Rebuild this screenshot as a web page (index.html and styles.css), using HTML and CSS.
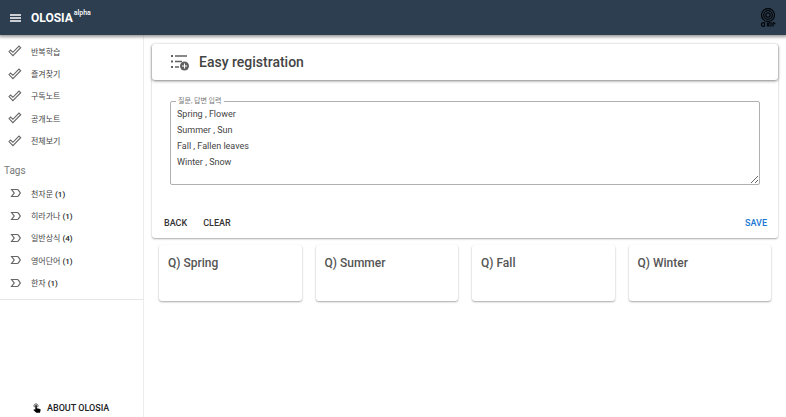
FILE: index.html
```html
<!DOCTYPE html>
<html lang="ko">
<head>
<meta charset="utf-8">
<meta name="viewport" content="width=device-width, initial-scale=1">
<title>OLOSIA</title>
<link rel="stylesheet" href="styles.css">
</head>
<body>
<svg class="defs" aria-hidden="true">
  <symbol id="check" viewBox="0 0 14 12"><path d="M1 6.600 2.600 5l2.300 2.300L11 1.100l1.700 1.600-7.800 7.900z"/></symbol>
  <symbol id="tag" viewBox="0 0 12 10"><path d="M1.600 1.500h5.600q.7 0 1.200.6L10.300 5 8.400 7.900q-.5.6-1.200.6H1.600L4.200 5z"/></symbol>
</svg>
<header class="topbar">
  <button class="menu" type="button" aria-label="Menu"><svg viewBox="0 0 12 8"><path d="M0 1h11M0 4h11M0 7h11"/></svg></button>
  <a class="brand" href="#">OLOSIA <sup>alpha</sup></a>
  <svg class="emblem" viewBox="0 0 16 20" aria-hidden="true">
    <circle cx="8" cy="7" r="6.500"/><circle cx="8" cy="7" r="4.300"/><circle cx="8" cy="7" r="2.200"/>
    <path d="M4.500 14.700c-4-1-4 4.500 0 3.500M4.500 14v4.500M7.500 14.500v4M10 14.700c-2 0-2 3.500 0 3.500M11 14v4.500M13 14.700c2 0 2 1 1.500 1.500M13 14.500v4"/>
  </svg>
</header>
<div class="shell">
  <aside class="sidebar">
    <nav>
      <ul class="list">
        <li><a href="#"><svg class="check"><use href="#check"/></svg>반복학습</a></li>
        <li><a href="#"><svg class="check"><use href="#check"/></svg>즐겨찾기</a></li>
        <li><a href="#"><svg class="check"><use href="#check"/></svg>구독노트</a></li>
        <li><a href="#"><svg class="check"><use href="#check"/></svg>공개노트</a></li>
        <li><a href="#"><svg class="check"><use href="#check"/></svg>전체보기</a></li>
      </ul>
      <h2 class="tags-title">Tags</h2>
      <ul class="list">
        <li><a href="#"><svg class="tag"><use href="#tag"/></svg><span>천자문 <b>(1)</b></span></a></li>
        <li><a href="#"><svg class="tag"><use href="#tag"/></svg><span>히라가나 <b>(1)</b></span></a></li>
        <li><a href="#"><svg class="tag"><use href="#tag"/></svg><span>일반상식 <b>(4)</b></span></a></li>
        <li><a href="#"><svg class="tag"><use href="#tag"/></svg><span>영어단어 <b>(1)</b></span></a></li>
        <li><a href="#"><svg class="tag"><use href="#tag"/></svg><span>한자 <b>(1)</b></span></a></li>
      </ul>
    </nav>
    <a class="about" href="#"><svg viewBox="0 0 8 10" aria-hidden="true"><path class="ring" d="M1.500 4.200a2 2 0 1 1 3 0"/><path d="M2.300 2.300q.8-.8 1.500 0v3l3.300.8q.7.300.5 1L7 9.700H3.300L.4 6.900l.7-.6 1.200.5z"/></svg>ABOUT OLOSIA</a>
  </aside>
  <main class="content">
    <form class="panel">
      <header class="panel-head">
        <svg viewBox="0 0 18 17" aria-hidden="true"><path class="line" d="M4 2h12M4 7.500h7M4 13h4"/><path d="M0 1h2v2H0zM0 6.500h2v2H0zM0 12h2v2H0z"/><circle cx="13.500" cy="12" r="4.500"/><path class="plus" d="M13.500 9.500v5M11 12h5"/></svg>
        <h1>Easy registration</h1>
      </header>
      <div class="field">
        <label for="entries">질문, 답변 입력</label>
        <textarea id="entries" spellcheck="false">Spring , Flower
Summer , Sun
Fall , Fallen leaves
Winter , Snow</textarea>
      </div>
      <div class="actions">
        <button type="button">BACK</button>
        <button type="button">CLEAR</button>
        <button class="save" type="button">SAVE</button>
      </div>
    </form>
    <section class="cards">
      <article>Q) Spring</article>
      <article>Q) Summer</article>
      <article>Q) Fall</article>
      <article>Q) Winter</article>
    </section>
  </main>
</div>
</body>
</html>
```
FILE: styles.css
```css
* { box-sizing: border-box; }
body {
  margin: 0;
  min-height: 100vh;
  display: flex;
  flex-direction: column;
  background: #fff;
  color: #444;
  font-family: Roboto, "Noto Sans CJK KR", sans-serif;
  font-size: 9px;
}
a { color: inherit; text-decoration: none; }
button { border: 0; padding: 0; background: none; font: inherit; color: inherit; }
svg { display: block; flex: none; }
.defs { position: absolute; width: 0; height: 0; }

.topbar {
  position: relative;
  display: flex;
  align-items: center;
  height: 35px;
  padding: 0 10px;
  background: #2c3e50;
  color: #fff;
  box-shadow: 0 1px 3px 1px rgba(0, 0, 0, .4);
}
.menu svg { width: 12px; height: 8px; stroke: #fff; stroke-width: 1.3; }
.brand { display: flex; gap: 1px; margin-left: 9px; font-size: 12px; font-weight: 700; line-height: 16px; }
.brand sup { font-size: 7px; font-weight: 500; line-height: 6px; }
.emblem { width: 16px; height: 20px; margin-left: auto; fill: none; stroke: #05080c; stroke-width: 1.3; }

.shell { flex: 1; display: flex; }
.sidebar {
  flex: none;
  width: 144px;
  display: flex;
  flex-direction: column;
  justify-content: space-between;
  padding-top: 5px;
  border-right: 1px solid #ececec;
}
.sidebar nav { border-bottom: 1px solid #e6e6e6; padding-bottom: 5px; }
.list {
  display: grid;
  grid-template-rows: repeat(5, 1fr);
  height: 112px;
  margin: 0;
  padding: 0;
  list-style: none;
  font-size: 8px;
}
.list a { display: flex; align-items: center; height: 100%; padding-left: 8px; }
.list b { font-weight: 500; color: #222; }
.list svg { fill: none; stroke: #666; }
.check { width: 14px; height: 12px; margin-right: 9px; stroke-width: 1.1; }
.tag { width: 12px; height: 10px; margin: 0 9px 0 2px; stroke-width: 1.2; }
.tags-title { margin: 10px 0 2px 4px; font-size: 10px; font-weight: 400; line-height: 18px; color: #777; }
.about {
  display: flex;
  align-items: center;
  gap: 6px;
  padding: 0 0 3px 33px;
  font-weight: 500;
  line-height: 12px;
  color: #222;
}
.about svg { width: 8px; height: 10px; }
.about .ring { fill: none; stroke: #555; }

.content { flex: 1; min-width: 0; padding: 9px 8px; }
.panel, .cards article { border-radius: 3px; box-shadow: 0 1px 2px rgba(0, 0, 0, .35); background: #fff; }
.panel-head {
  display: flex;
  align-items: center;
  gap: 10px;
  height: 36px;
  padding: 0 19px;
  border-radius: 3px;
  box-shadow: 0 1px 3px rgba(0, 0, 0, .5);
}
.panel-head svg { width: 18px; height: 17px; fill: #616161; }
.panel-head .line { stroke: #616161; stroke-width: 1.5; }
.panel-head .plus { stroke: #fff; }
h1 { margin: 0; font-size: 14px; font-weight: 500; line-height: 18px; color: #444; }
.field { position: relative; padding: 21px 18px 0; }
.field label {
  position: absolute;
  left: 24px;
  top: 16px;
  padding: 0 2px;
  background: #fff;
  font-size: 7px;
  line-height: 10px;
  color: #777;
}
textarea {
  display: block;
  width: 100%;
  height: 84px;
  padding: 4px 6px;
  border: 1px solid #b0b0b0;
  border-radius: 2px;
  background: transparent;
  font: 9px/16px Roboto, "Noto Sans CJK KR", sans-serif;
  color: #444;
  resize: vertical;
}
.actions {
  display: flex;
  gap: 16px;
  padding: 32px 11px 9px 12px;
  font-weight: 500;
  line-height: 12px;
  color: #333;
}
.actions .save { margin-left: auto; color: #1976d2; }
.cards { display: grid; grid-template-columns: repeat(4, 1fr); gap: 14px; padding: 7px 7px 0; }
.cards article { min-height: 56px; padding: 9px; font-size: 12px; font-weight: 500; line-height: 18px; color: #555; }
```
